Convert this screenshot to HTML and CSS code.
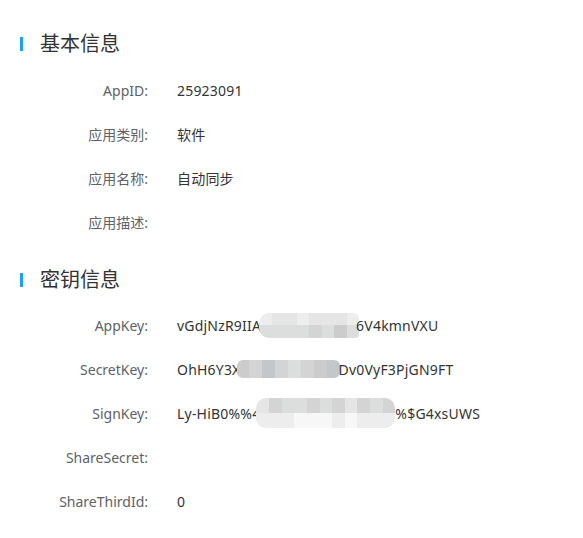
FILE: index.html
```html
<!DOCTYPE html>
<html lang="zh">
<head>
<meta charset="utf-8">
<link rel="stylesheet" href="styles.css">
</head>
<body>
<div class="page">
  <h2 class="section-title">基本信息</h2>
  <div class="row"><span class="label">AppID:</span><span class="value">25923091</span></div>
  <div class="row"><span class="label">应用类别:</span><span class="value">软件</span></div>
  <div class="row"><span class="label">应用名称:</span><span class="value">自动同步</span></div>
  <div class="row"><span class="label">应用描述:</span><span class="value"></span></div>

  <h2 class="section-title second">密钥信息</h2>
  <div class="row"><span class="label">AppKey:</span><span class="value">vGdjNzR9IIA<span class="mosaic m-app"><i class="c1"></i><i class="c2"></i><i class="c2"></i><i class="c1"></i><i class="c2"></i><i class="c2"></i><i class="c2"></i><i class="c1"></i><i class="c3"></i><i class="c3"></i><i class="c3"></i><i class="c3"></i><i class="c4"></i><i class="c3"></i><i class="c5"></i><i class="c3"></i></span>6V4kmnVXU</span></div>
  <div class="row"><span class="label">SecretKey:</span><span class="value">OhH6Y3X<span class="mosaic m-secret"><i class="c5"></i><i class="c4"></i><i class="c6"></i><i class="c4"></i><i class="c3"></i><i class="c4"></i><i class="c5"></i><i class="c6"></i></span>Dv0VyF3PjGN9FT</span></div>
  <div class="row"><span class="label">SignKey:</span><span class="value">Ly-HiB0%%4<span class="mosaic m-sign"><i class="c2"></i><i class="c4"></i><i class="c3"></i><i class="c3"></i><i class="c4"></i><i class="c3"></i><i class="c4"></i><i class="c2"></i><i class="c4"></i><i class="c3"></i><i class="c4"></i><i class="c1"></i><i class="c1"></i><i class="c1"></i><i class="c0"></i><i class="c0"></i><i class="c0"></i><i class="c1"></i><i class="c0"></i><i class="c1"></i><i class="c1"></i><i class="c1"></i></span>%$G4xsUWS</span></div>
  <div class="row"><span class="label">ShareSecret:</span><span class="value"></span></div>
  <div class="row"><span class="label">ShareThirdId:</span><span class="value">0</span></div>
</div>
</body>
</html>
```

FILE: styles.css
```css
html, body {
  margin: 0;
  padding: 0;
  background: #ffffff;
}

body {
  font-family: "Noto Sans", "Noto Sans CJK SC", sans-serif;
  font-size: 14px;
  color: #333333;
}

.page {
  padding: 24px 20px 0 20px;
}

.section-title {
  margin: 0 0 4px 0;
  height: 40px;
  line-height: 40px;
  font-size: 20px;
  font-weight: normal;
  color: #333333;
  display: flex;
  align-items: center;
  gap: 17px;
}

.section-title::before {
  content: "";
  width: 3px;
  height: 14px;
  background: #1e9fff;
}

.section-title.second {
  margin-top: 16px;
  margin-bottom: 3px;
}

.row {
  display: flex;
  align-items: center;
  height: 44px;
}

.label {
  width: 128px;
  text-align: right;
  color: #606266;
  flex-shrink: 0;
}

.value {
  margin-left: 29px;
  color: #333333;
  display: flex;
  align-items: center;
  white-space: nowrap;
  letter-spacing: 0.2px;
}

.mosaic {
  display: grid;
  overflow: hidden;
}

.mosaic i {
  display: block;
}

.m-app {
  width: 100px;
  height: 25px;
  margin: 0 -3px 0 -2px;
  grid-template-columns: repeat(8, 1fr);
  grid-template-rows: 12px 13px;
  border-radius: 10px 6px 4px 10px;
}

.m-secret {
  width: 103px;
  height: 18px;
  margin: 0 -1px 0 -4px;
  grid-template-columns: repeat(8, 1fr);
  grid-template-rows: 18px;
  border-radius: 6px;
}

.m-sign {
  width: 139px;
  height: 30px;
  margin: 0 0 0 -4px;
  grid-template-columns: repeat(11, 1fr);
  grid-template-rows: 15px 15px;
  border-radius: 10px;
}

.c0 { background: #f7f7f7; }
.c1 { background: #ededed; }
.c2 { background: #e5e5e5; }
.c3 { background: #dcdddd; }
.c4 { background: #d4d4d4; }
.c5 { background: #cccccc; }
.c6 { background: #c4c7ca; }
```
